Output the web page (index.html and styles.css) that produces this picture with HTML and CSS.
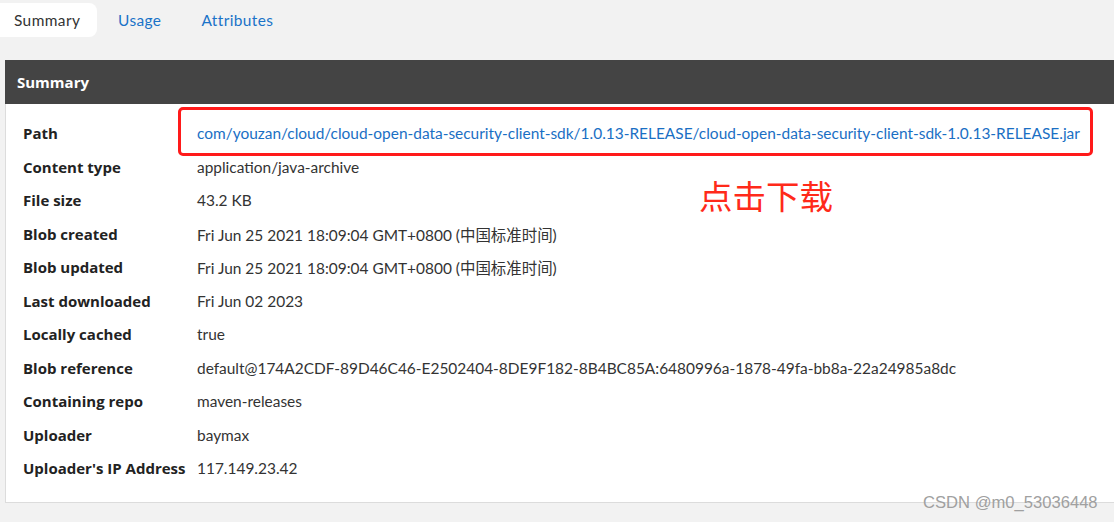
FILE: index.html
```html
<!DOCTYPE html>
<html>
<head>
<meta charset="utf-8">
<link rel="stylesheet" href="styles.css">
</head>
<body>
<div class="page">
  <nav class="tabs">
    <span class="tab active">Summary</span>
    <span class="tab">Usage</span>
    <span class="tab">Attributes</span>
  </nav>
  <section class="panel">
    <header class="panel-head">Summary</header>
    <div class="panel-body">
      <div class="row"><span class="label">Path</span><a class="value link">com/youzan/cloud/cloud-open-data-security-client-sdk/1.0.13-RELEASE/cloud-open-data-security-client-sdk-1.0.13-RELEASE.jar</a></div>
      <div class="row"><span class="label">Content type</span><span class="value">application/java-archive</span></div>
      <div class="row"><span class="label">File size</span><span class="value">43.2 KB</span></div>
      <div class="row"><span class="label">Blob created</span><span class="value">Fri Jun 25 2021 18:09:04 GMT+0800 (中国标准时间)</span></div>
      <div class="row"><span class="label">Blob updated</span><span class="value">Fri Jun 25 2021 18:09:04 GMT+0800 (中国标准时间)</span></div>
      <div class="row"><span class="label">Last downloaded</span><span class="value">Fri Jun 02 2023</span></div>
      <div class="row"><span class="label">Locally cached</span><span class="value">true</span></div>
      <div class="row"><span class="label">Blob reference</span><span class="value">default@174A2CDF-89D46C46-E2502404-8DE9F182-8B4BC85A:6480996a-1878-49fa-bb8a-22a24985a8dc</span></div>
      <div class="row"><span class="label">Containing repo</span><span class="value">maven-releases</span></div>
      <div class="row"><span class="label">Uploader</span><span class="value">baymax</span></div>
      <div class="row"><span class="label">Uploader's IP Address</span><span class="value">117.149.23.42</span></div>
    </div>
  </section>
  <div class="mark-box"></div>
  <div class="mark-text">点击下载</div>
  <div class="watermark">CSDN @m0_53036448</div>
</div>
</body>
</html>
```
FILE: styles.css
```css
html, body {
  margin: 0;
  padding: 0;
  background: #f2f2f2;
  overflow: hidden;
}
body {
  width: 1114px;
  height: 522px;
  font-family: Lato, "Noto Sans CJK SC", sans-serif;
  font-size: 15.45px;
  color: #333;
}
.page {
  position: relative;
  height: 522px;
}
.tabs {
  display: flex;
  padding-top: 3px;
  height: 34px;
}
.tab {
  display: flex;
  align-items: center;
  color: #1a73c8;
  letter-spacing: 0.4px;
}
.tab.active {
  background: #fff;
  color: #333;
  width: 83px;
  padding-left: 14px;
  border-radius: 0 8px 8px 0;
}
.tab:nth-child(2) { margin-left: 21px; }
.tab:nth-child(3) { margin-left: 40px; }
.panel {
  margin: 23px 0 0 5px;
  background: #fff;
  border: 1px solid #dcdcdc;
  border-right: none;
  height: 441px;
}
.panel-head {
  background: #444;
  color: #fff;
  font-family: "Open Sans", sans-serif;
  font-weight: 700;
  font-size: 15px;
  height: 44px;
  display: flex;
  align-items: center;
  padding-left: 12px;
  margin-top: -1px;
  margin-left: -1px;
}
.panel-body {
  padding: 12.5px 0 0 17px;
}
.row {
  display: grid;
  grid-template-columns: 174px 1fr;
  height: 33.5px;
  align-items: center;
}
.label {
  font-family: "Open Sans", sans-serif;
  font-weight: 700;
  font-size: 15px;
  color: #222;
}
.value {
  color: #333;
  white-space: nowrap;
}
.link {
  color: #1a6fc4;
}
.mark-box {
  position: absolute;
  left: 178px;
  top: 107px;
  width: 909px;
  height: 43px;
  border: 3px solid #ff1a1a;
  border-radius: 5px;
}
.mark-text {
  position: absolute;
  left: 699px;
  top: 173px;
  font-family: "Noto Sans CJK SC", sans-serif;
  font-size: 33.5px;
  line-height: 44px;
  color: #ff2a1a;
}
.watermark {
  position: absolute;
  left: 923px;
  top: 493px;
  font-family: "Liberation Sans", "Noto Sans CJK SC", sans-serif;
  font-size: 16.6px;
  color: #a0a0a0;
}
```
